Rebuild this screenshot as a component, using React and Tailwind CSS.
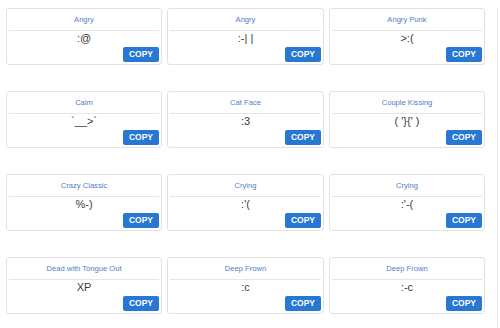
const items = [
  ['Angry', ':@'],
  ['Angry', ':-| |'],
  ['Angry Punk', '>:('],
  ['Calm', '`__>`'],
  ['Cat Face', ':3'],
  ['Couple Kissing', "( '}{' )"],
  ['Crazy Classic', '%-)'],
  ['Crying', ":'("],
  ['Crying', ":'-("],
  ['Dead with Tongue Out', 'XP'],
  ['Deep Frown', ':c'],
  ['Deep Frown', ':-c'],
]

function Card({ name, face }) {
  return (
    <div className="flex h-[57px] flex-col rounded-[3px] border border-[#e2e2e2] bg-white">
      <div className="flex h-[21px] items-center justify-center text-[7.6px] text-[#4f7ec9]">{name}</div>
      <div className="mx-[2px] border-t border-[#e6e6e6]" />
      <div className="flex h-[15px] items-center justify-center text-[11px] text-[#3a3a3a]">{face}</div>
      <div className="flex justify-end pr-[2px] pt-px">
        <button className="flex h-[15px] w-[36px] items-center justify-center rounded-[2px] bg-[#2877d3] text-[8.5px] font-bold text-white">
          COPY
        </button>
      </div>
    </div>
  )
}

export default function App() {
  return (
    <div className="flex h-[328px] w-[500px] overflow-hidden bg-white pl-[6px] pt-[8px]" style={{ fontFamily: '"Liberation Sans", Arial, sans-serif' }}>
      <div className="grid grid-cols-[156px_157px_156px] content-start gap-x-[5px] gap-y-[26px]">
        {items.map(([n, f], i) => <Card key={i} name={n} face={f} />)}
      </div>
      <div className="ml-[12px] border-l border-[#ececec]" />
    </div>
  )
}
